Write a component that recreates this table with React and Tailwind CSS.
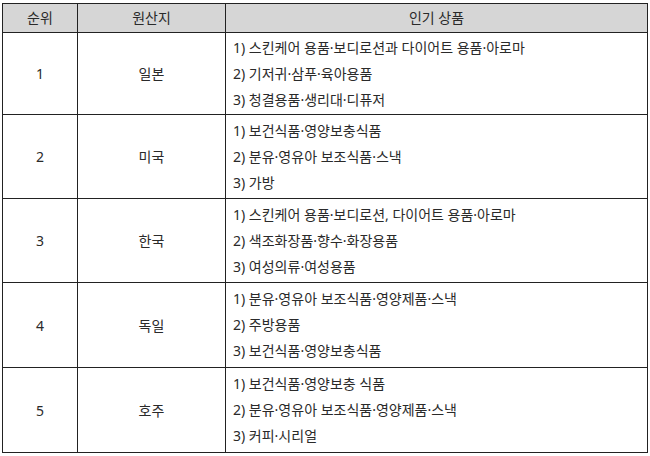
import React from 'react';

const rows = [
  { rank: 1, origin: '일본', h: 'h-[82px]', items: ['스킨케어 용품·보디로션과 다이어트 용품·아로마', '기저귀·삼푸·육아용품', '청결용품·생리대·디퓨저'] },
  { rank: 2, origin: '미국', h: 'h-[84px]', items: ['보건식품·영양보충식품', '분유·영유아 보조식품·스낵', '가방'] },
  { rank: 3, origin: '한국', h: 'h-[84px]', items: ['스킨케어 용품·보디로션, 다이어트 용품·아로마', '색조화장품·향수·화장용품', '여성의류·여성용품'] },
  { rank: 4, origin: '독일', h: 'h-[85px]', items: ['분유·영유아 보조식품·영양제품·스낵', '주방용품', '보건식품·영양보충식품'] },
  { rank: 5, origin: '호주', h: 'h-[85px]', items: ['보건식품·영양보충 식품', '분유·영유아 보조식품·영양제품·스낵', '커피·시리얼'] },
];

export default function App() {
  return (
    <div className="w-[650px] h-[456px] bg-white pt-[3px] pl-[2px] font-['Noto_Sans','Noto_Sans_CJK_KR',sans-serif] text-[14px] text-[#2a2a2a]">
      <table className="border-collapse w-[646px] table-fixed">
        <colgroup>
          <col className="w-[75px]" />
          <col className="w-[148px]" />
          <col />
        </colgroup>
        <thead>
          <tr className="h-[29px] bg-[#d6d6d6]">
            <th className="border border-[#222] font-normal text-center leading-[20px]">순위</th>
            <th className="border border-[#222] font-normal text-center leading-[20px]">원산지</th>
            <th className="border border-[#222] font-normal text-center leading-[20px]">인기 상품</th>
          </tr>
        </thead>
        <tbody>
          {rows.map((row) => (
            <tr key={row.rank} className={row.h}>
              <td className="border border-[#222] text-center">{row.rank}</td>
              <td className="border border-[#222] text-center">{row.origin}</td>
              <td className="border border-[#222] pl-[7px]">
                <div className="flex flex-col">
                  {row.items.map((item, i) => (
                    <div key={i} className="leading-[26px]">
                      {i + 1}) {item}
                    </div>
                  ))}
                </div>
              </td>
            </tr>
          ))}
        </tbody>
      </table>
    </div>
  );
}
